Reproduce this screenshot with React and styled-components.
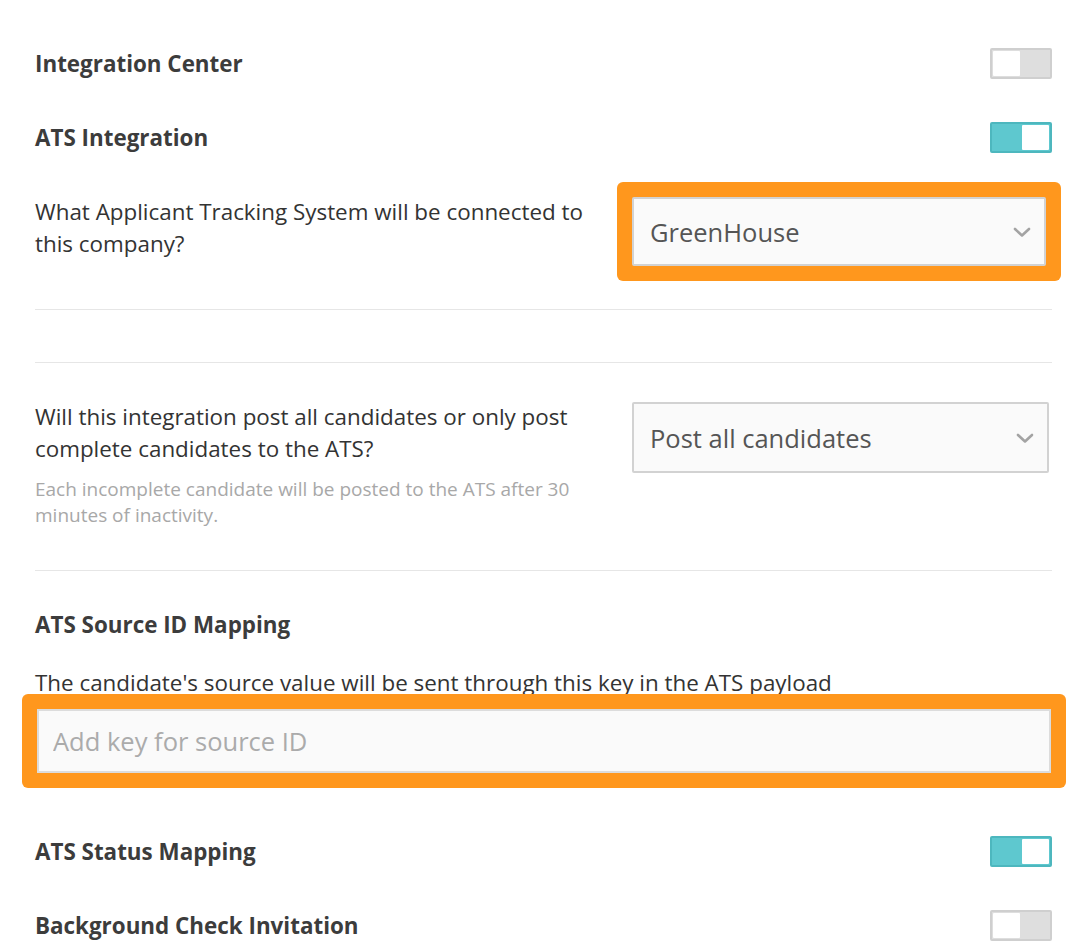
import React, { useState } from 'react';
import styled, { createGlobalStyle } from 'styled-components';

const GlobalStyle = createGlobalStyle`
	body {
		margin: 0;
		background: #fff;
		font-family: "Open Sans", "Noto Sans", sans-serif;
		color: #333;
	}
`

const Page = styled.div`
	width: 1072px;
	box-sizing: border-box;
	padding: 48px 20px 40px 35px;
	display: flex;
	flex-direction: column;
`

const ToggleRow = styled.div`
	display: flex;
	align-items: center;
	justify-content: space-between;
	height: 31px;
	margin-top: ${p => p.$top || 0}px;
`

const Title = styled.div`
	font-size: 22.4px;
	font-weight: 700;
	color: #3c3c3c;
	line-height: 28px;
	margin-top: ${p => p.$top || 0}px;
`

const Switch = styled.button`
	width: 62px;
	height: 31px;
	box-sizing: border-box;
	padding: 1px;
	border: 2px solid ${p => p.$on ? '#4db7be' : '#cfcfcf'};
	background: ${p => p.$on ? '#5ec8cf' : '#dedede'};
	border-radius: 2px;
	display: flex;
	justify-content: ${p => p.$on ? 'flex-end' : 'flex-start'};
	cursor: pointer;
	span {
		width: 27px;
		height: 100%;
		background: #fff;
		border-radius: 1px;
	}
`

const QuestionRow = styled.div`
	display: flex;
	align-items: flex-start;
	margin-top: ${p => p.$top || 0}px;
`

const QuestionCol = styled.div`
	flex: 0 0 597px;
`

const QuestionText = styled.div`
	width: 570px;
	font-size: 22.4px;
	line-height: 32px;
	color: #333;
	margin-top: -1px;
`

const Hint = styled.div`
	font-size: 19px;
	line-height: 26px;
	color: #a8a8a8;
	margin-top: 11px;
`

const Highlight = styled.div`
	margin: -15px;
	padding: 15px;
	background: #ff971d;
	border-radius: 6px;
	display: flex;
`

const SelectWrap = styled.div`
	position: relative;
	width: ${p => p.$width}px;
	height: ${p => p.$height}px;
	svg {
		position: absolute;
		right: 14px;
		top: 50%;
		margin-top: -6px;
		pointer-events: none;
	}
`

const Select = styled.select`
	appearance: none;
	-webkit-appearance: none;
	width: 100%;
	height: 100%;
	box-sizing: border-box;
	border: 2px solid #d2d2d2;
	border-radius: 2px;
	background: #fafafa;
	padding: 0 50px 0 16px;
	font-family: "Open Sans", "Noto Sans", sans-serif;
	font-size: 25.5px;
	color: #555;
	outline: none;
`

const Divider = styled.hr`
	border: none;
	border-top: 1px solid #e6e6e6;
	margin: ${p => p.$top || 0}px 0 0;
	width: 100%;
`

const Description = styled.div`
	font-size: 22.4px;
	line-height: 32px;
	color: #333;
	margin-top: 28px;
`

const TextInput = styled.input`
	width: 100%;
	height: 64px;
	box-sizing: border-box;
	border: 2px solid #dcdcdc;
	background: #fafafa;
	padding: 0 14px;
	font-family: "Open Sans", "Noto Sans", sans-serif;
	font-size: 25.5px;
	color: #555;
	outline: none;
	&::placeholder {
		color: #ababab;
	}
`

const InputBlock = styled.div`
	margin: 10px 1px 0 2px;
	display: flex;
	flex-direction: column;
`

const Chevron = () => (
	<svg width="20" height="12" viewBox="0 0 20 12" fill="none">
		<path d="M3 3l7 6.5L17 3" stroke="#a3a3a3" strokeWidth="2.6" strokeLinecap="round" strokeLinejoin="round" />
	</svg>
)

const Toggle = ({ initial }) => {
	const [on, setOn] = useState(initial)
	return (
		<Switch $on={on} onClick={() => setOn(!on)}><span /></Switch>
	)
}

const App = () => {
	const [ats, setAts] = useState('greenhouse')
	const [post, setPost] = useState('all')

	return (
		<Page>
			<GlobalStyle />
			<ToggleRow>
				<Title>Integration Center</Title>
				<Toggle initial={false} />
			</ToggleRow>
			<ToggleRow $top={43}>
				<Title>ATS Integration</Title>
				<Toggle initial={true} />
			</ToggleRow>

			<QuestionRow $top={44}>
				<QuestionCol>
					<QuestionText>What Applicant Tracking System will be connected to this company?</QuestionText>
				</QuestionCol>
				<Highlight>
					<SelectWrap $width={414} $height={69}>
						<Select value={ats} onChange={e => setAts(e.target.value)}>
							<option value="greenhouse">GreenHouse</option>
							<option value="lever">Lever</option>
							<option value="workday">Workday</option>
						</Select>
						<Chevron />
					</SelectWrap>
				</Highlight>
			</QuestionRow>

			<Divider $top={43} />
			<Divider $top={52} />

			<QuestionRow $top={39}>
				<QuestionCol>
					<QuestionText>Will this integration post all candidates or only post complete candidates to the ATS?</QuestionText>
					<Hint>Each incomplete candidate will be posted to the ATS after 30<br />minutes of inactivity.</Hint>
				</QuestionCol>
				<SelectWrap $width={417} $height={71}>
					<Select value={post} onChange={e => setPost(e.target.value)}>
						<option value="all">Post all candidates</option>
						<option value="complete">Post complete candidates only</option>
					</Select>
					<Chevron />
				</SelectWrap>
			</QuestionRow>

			<Divider $top={42} />

			<Title $top={40}>ATS Source ID Mapping</Title>
			<Description>The candidate's source value will be sent through this key in the ATS payload</Description>
			<InputBlock>
				<Highlight>
					<TextInput placeholder="Add key for source ID" />
				</Highlight>
			</InputBlock>

			<ToggleRow $top={63}>
				<Title>ATS Status Mapping</Title>
				<Toggle initial={true} />
			</ToggleRow>
			<ToggleRow $top={43}>
				<Title>Background Check Invitation</Title>
				<Toggle initial={false} />
			</ToggleRow>
		</Page>
	)
}

export default App;
